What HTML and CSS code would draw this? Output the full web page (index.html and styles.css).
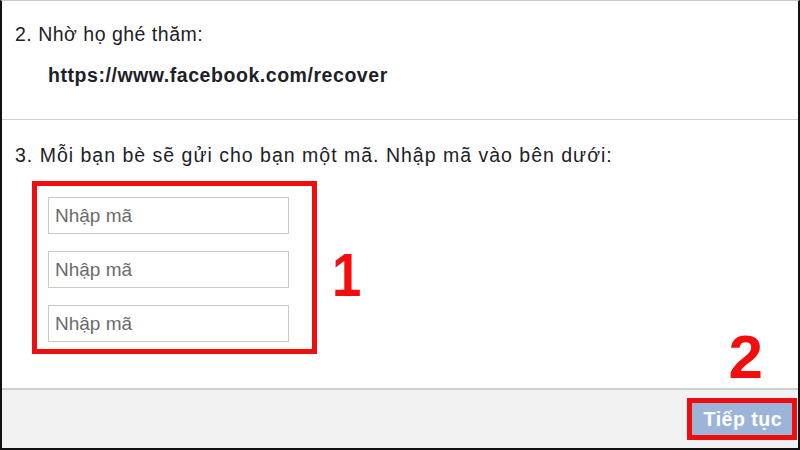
FILE: index.html
```html
<!DOCTYPE html>
<html lang="vi">
<head>
    <meta charset="UTF-8">
    <title>Khôi phục tài khoản</title>
    <link rel="stylesheet" href="styles.css">
</head>
<body>
    <div class="dialog">
        <div class="step step-visit">
            <p class="step-title">2. Nhờ họ ghé thăm:</p>
            <p class="link">https://www.facebook.com/recover</p>
        </div>

        <div class="step step-codes">
            <p class="step-title step-title-wide">3. Mỗi bạn bè sẽ gửi cho bạn một mã. Nhập mã vào bên dưới:</p>
            <div class="codes-row">
                <div class="codes mark">
                    <input class="code" type="text" placeholder="Nhập mã">
                    <input class="code" type="text" placeholder="Nhập mã">
                    <input class="code" type="text" placeholder="Nhập mã">
                </div>
                <span class="label label-one">1</span>
            </div>
            <span class="label label-two">2</span>
        </div>

        <div class="footer">
            <div class="mark mark-button">
                <button class="continue">Tiếp tục</button>
            </div>
        </div>
    </div>
</body>
</html>
```

FILE: styles.css
```css
html, body {
    margin: 0;
    padding: 0;
}

body {
    font-family: "Liberation Sans", Arial, sans-serif;
    background-color: white;
    color: #1d2129;
    width: 800px;
    height: 450px;
    overflow: hidden;
}

.dialog {
    box-sizing: border-box;
    height: 450px;
    border-top: 1px solid #c8c8c8;
    border-left: 2px solid #111;
    border-right: 2px solid #111;
    border-bottom: 2px solid #111;
    display: flex;
    flex-direction: column;
}

p {
    margin: 0;
}

.step {
    padding: 0 13px;
}

.step-title {
    font-size: 19.5px;
    line-height: 22px;
    letter-spacing: 0.5px;
}

.step-title-wide {
    letter-spacing: 1px;
}

.step-visit {
    height: 119px;
    padding-top: 22px;
    box-sizing: border-box;
    border-bottom: 1px solid #cfcfcf;
}

.link {
    margin-top: 19px;
    margin-left: 33px;
    font-size: 19.5px;
    font-weight: bold;
    line-height: 22px;
    letter-spacing: 0.55px;
}

.step-codes {
    position: relative;
    flex: 1;
    padding-top: 24px;
}

.codes-row {
    display: flex;
    align-items: center;
    margin-top: 15px;
    margin-left: 17px;
}

.mark {
    border: 5px solid #f00d0d;
}

.codes {
    display: flex;
    flex-direction: column;
    gap: 17px;
    padding: 11px 23px 7px 11px;
}

.code {
    box-sizing: border-box;
    width: 241px;
    height: 37px;
    margin: 0;
    padding: 0 6px;
    border: 1px solid #c9c9c9;
    font-family: inherit;
    font-size: 19px;
    color: #1d2129;
}

.code::placeholder {
    color: #6b6b6b;
}

.label {
    color: #f50d0d;
    font-family: "Liberation Sans", Arial, sans-serif;
    font-weight: bold;
    font-size: 62px;
    line-height: 1;
}

.label-one {
    margin-left: 15px;
    margin-top: 14px;
    transform: scaleX(0.85);
    transform-origin: left center;
}

.label-two {
    position: absolute;
    right: 35px;
    bottom: 0;
}

.footer {
    height: 60px;
    box-sizing: border-box;
    border-top: 2px solid #cfcfcf;
    background-color: #f2f2f2;
    display: flex;
    justify-content: flex-end;
    align-items: center;
    padding-right: 1px;
}

.mark-button {
    padding: 0;
    display: flex;
}

.continue {
    background-color: #9cb4d8;
    color: white;
    border: none;
    font-family: inherit;
    font-weight: bold;
    font-size: 19.5px;
    letter-spacing: 0.5px;
    padding: 0 10px 0 12px;
    height: 32px;
    margin: 0;
}
```
